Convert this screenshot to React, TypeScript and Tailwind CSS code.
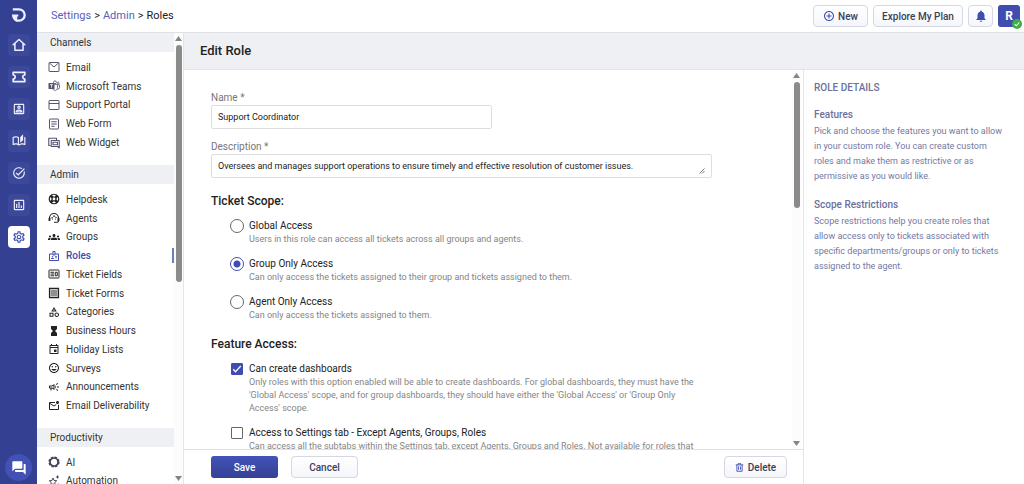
import { useState } from "react";
import type { ReactNode } from "react";
import type { IconType } from "react-icons";
import {
  MdForum,
  MdGroups,
  MdHourglassFull,
  MdNotifications,
  MdOutlineAddCircleOutline,
  MdOutlineAutoStories,
  MdOutlineBadge,
  MdOutlineCampaign,
  MdOutlineCategory,
  MdOutlineEvent,
  MdOutlineMarkEmailUnread,
  MdOutlinePoll,
  MdOutlinePortrait,
  MdOutlineSettings,
  MdOutlineTagFaces,
  MdTaskAlt,
} from "react-icons/md";
import { clsx } from "clsx";

type IconProps = { className?: string };
type Icon = IconType | ((props: IconProps) => ReactNode);

function Logo({ className }: IconProps) {
  return (
    <svg viewBox="0 0 14 14" className={className} fill="none" stroke="currentColor" strokeWidth="2.3">
      <path d="M.8 1.300h6.200a5.700 5.700 0 0 1 0 11.400H4.500" />
      <path d="M0 6.500h6.300v2H5.200v5.300C2.200 13 0 10.500 0 6.500z" fill="currentColor" stroke="none" />
    </svg>
  );
}

function HomeIcon({ className }: IconProps) {
  return (
    <svg viewBox="0 0 24 24" className={className} fill="none" stroke="currentColor" strokeWidth="2.6" strokeLinejoin="round">
      <path d="M2 11.500 12 2.500l10 9M5 9.500V21h14V9.500" strokeLinecap="round" />
    </svg>
  );
}

function TicketIcon({ className }: IconProps) {
  return (
    <svg viewBox="0 0 24 24" className={className} fill="none" stroke="currentColor" strokeWidth="2.8" strokeLinejoin="round">
      <path d="M2 4h20v4.500a3.500 3.500 0 0 0 0 7V20H2v-4.500a3.500 3.500 0 0 0 0-7z" />
    </svg>
  );
}

function MailIcon({ className }: IconProps) {
  return (
    <svg viewBox="0 0 24 24" className={className} fill="none" stroke="currentColor" strokeWidth="2">
      <rect x="2" y="3" width="20" height="18" rx="1" />
      <path d="m3 4 9 8 9-8" />
    </svg>
  );
}

function TeamsIcon({ className }: IconProps) {
  return (
    <svg viewBox="0 0 24 24" className={className} fill="none" stroke="currentColor" strokeWidth="1.6">
      <circle cx="14" cy="4.500" r="2.800" />
      <circle cx="20.500" cy="6" r="1.800" />
      <path d="M13 9h6v7a5 5 0 0 1-9.500 2M19 9.500h4V15a3.500 3.500 0 0 1-4 3.400" />
      <path d="M1 6h12v12H1z" fill="currentColor" stroke="none" />
      <path d="M4 9.300h6M7 9v6.500" stroke="#fff" strokeWidth="1.500" />
    </svg>
  );
}

function PortalIcon({ className }: IconProps) {
  return (
    <svg viewBox="0 0 24 24" className={className} fill="none" stroke="currentColor" strokeWidth="2">
      <rect x="2" y="3" width="20" height="18" rx="1" />
      <path d="M2 9h20" />
    </svg>
  );
}

function WebFormIcon({ className }: IconProps) {
  return (
    <svg viewBox="0 0 24 24" className={className} fill="none" stroke="currentColor" strokeWidth="2">
      <rect x="3" y="2" width="18" height="20" rx="1" />
      <path d="M6.500 7.500h11M6.500 12h11M6.500 16.500h7" />
    </svg>
  );
}

function WidgetIcon({ className }: IconProps) {
  return (
    <svg viewBox="0 0 24 24" className={clsx(className, "text-[#222]")} fill="none" stroke="currentColor" strokeWidth="2.2" strokeLinejoin="round">
      <path d="M5 17H1.500V2.500H17V6" />
      <path d="M6.500 7H22.500v15l-3-3h-13z" />
      <path d="M10 10.500h9v5h-9z" />
    </svg>
  );
}

function HelpdeskIcon({ className }: IconProps) {
  return (
    <svg viewBox="0 0 24 24" className={className} fill="none" stroke="currentColor">
      <circle cx="12" cy="12" r="9.500" strokeWidth="2.400" />
      <circle cx="12" cy="12" r="4" strokeWidth="2.400" />
      <path d="m5 5 4 4M19 5l-4 4M5 19l4-4M19 19l-4-4" strokeWidth="5" />
    </svg>
  );
}

function AgentIcon({ className }: IconProps) {
  return (
    <svg viewBox="0 0 24 24" className={className} fill="none" stroke="currentColor" strokeWidth="2.400">
      <path d="M3 15v-3a9 9 0 0 1 18 0v5.500a3 3 0 0 1-3 3h-6" />
      <path d="M3 12v6M21 12v6" strokeWidth="3.600" />
      <path d="M6.500 12c3-.5 5-2.300 5.500-5 1 2.500 3 3.800 5.500 4" strokeWidth="1.800" />
      <circle cx="9" cy="14" r="1.200" fill="currentColor" stroke="none" />
      <circle cx="15" cy="14" r="1.200" fill="currentColor" stroke="none" />
    </svg>
  );
}

function FieldsIcon({ className }: IconProps) {
  return (
    <svg viewBox="0 0 24 24" className={className} fill="none" stroke="currentColor" strokeWidth="2">
      <rect x="2" y="4" width="20" height="16" rx="1" />
      <path d="M5 8.500h7M5 12h7M5 15.500h7M14.500 8.500h4v7h-4z" />
    </svg>
  );
}

function FormsIcon({ className }: IconProps) {
  return (
    <svg viewBox="0 0 24 24" className={className} fill="none" stroke="currentColor" strokeWidth="2.400">
      <path d="M3 2.500h18v19H3zM3 3.500h18M3 20.500h18M5 8h14M5 12h14M5 16h14" />
    </svg>
  );
}

function AiIcon({ className }: IconProps) {
  return (
    <svg viewBox="0 0 24 24" className={className} fill="none" stroke="currentColor">
      <circle cx="12" cy="12" r="8" strokeWidth="3.400" />
      <circle cx="12" cy="12" r="9" strokeWidth="4.400" strokeDasharray="4.600 2.470" />
    </svg>
  );
}

function AutomationIcon({ className }: IconProps) {
  return (
    <svg viewBox="0 0 24 24" className={className} fill="none" stroke="currentColor" strokeWidth="2" strokeLinejoin="round">
      <path d="m10 6 2.200 5 5.300.5-4 3.600 1.200 5.400-4.700-2.800-4.700 2.800 1.200-5.400-4-3.600 5.300-.5z" />
      <path d="M19 1v6M16 4h6M20 17v4" />
    </svg>
  );
}

function TrashIcon({ className }: IconProps) {
  return (
    <svg viewBox="0 0 24 24" className={className} fill="none" stroke="currentColor" strokeWidth="2.400">
      <path d="M2 5h20M8 4V2h8v2M5 5v17h14V5M9.500 9v9M14.500 9v9" />
    </svg>
  );
}

const RAIL_ITEMS: { label: string; icon: Icon }[] = [
  { label: "Home", icon: HomeIcon },
  { label: "Tickets", icon: TicketIcon },
  { label: "Contacts", icon: MdOutlinePortrait },
  { label: "Knowledge Base", icon: MdOutlineAutoStories },
  { label: "Tasks", icon: MdTaskAlt },
  { label: "Reports", icon: MdOutlinePoll },
  { label: "Settings", icon: MdOutlineSettings },
];

const CHANNELS: { label: string; icon: Icon }[] = [
  { label: "Email", icon: MailIcon },
  { label: "Microsoft Teams", icon: TeamsIcon },
  { label: "Support Portal", icon: PortalIcon },
  { label: "Web Form", icon: WebFormIcon },
  { label: "Web Widget", icon: WidgetIcon },
];

const ADMIN: { label: string; icon: Icon }[] = [
  { label: "Helpdesk", icon: HelpdeskIcon },
  { label: "Agents", icon: AgentIcon },
  { label: "Groups", icon: MdGroups },
  { label: "Roles", icon: MdOutlineBadge },
  { label: "Ticket Fields", icon: FieldsIcon },
  { label: "Ticket Forms", icon: FormsIcon },
  { label: "Categories", icon: MdOutlineCategory },
  { label: "Business Hours", icon: MdHourglassFull },
  { label: "Holiday Lists", icon: MdOutlineEvent },
  { label: "Surveys", icon: MdOutlineTagFaces },
  { label: "Announcements", icon: MdOutlineCampaign },
  { label: "Email Deliverability", icon: MdOutlineMarkEmailUnread },
];

const PRODUCTIVITY: { label: string; icon: Icon }[] = [
  { label: "AI", icon: AiIcon },
  { label: "Automation", icon: AutomationIcon },
];

const SCOPES = [
  { id: "global", label: "Global Access", hint: "Users in this role can access all tickets across all groups and agents." },
  {
    id: "group",
    label: "Group Only Access",
    hint: "Can only access the tickets assigned to their group and tickets assigned to them.",
  },
  { id: "agent", label: "Agent Only Access", hint: "Can only access the tickets assigned to them." },
];

const FEATURES = [
  {
    id: "dashboards",
    label: "Can create dashboards",
    hint: "Only roles with this option enabled will be able to create dashboards. For global dashboards, they must have the 'Global Access' scope, and for group dashboards, they should have either the 'Global Access' or 'Group Only Access' scope.",
    checked: true,
  },
  {
    id: "settings",
    label: "Access to Settings tab - Except Agents, Groups, Roles",
    hint: "Can access all the subtabs within the Settings tab, except Agents, Groups and Roles. Not available for roles that",
    checked: false,
  },
];

const BUTTON =
  "flex items-center justify-center rounded border border-[#d5d7e3] bg-linear-to-b from-white to-[#f5f6fb] text-[10px] font-medium text-[#3c4058]";

function Scrollbar({ thumb }: { thumb: string }) {
  return (
    <div aria-hidden="true" className="flex w-[9px] shrink-0 flex-col items-center bg-[#fcfcfc] py-[3px]">
      <svg viewBox="0 0 7 5" className="mb-1 h-[5px] w-[7px] shrink-0 fill-[#858585]">
        <path d="M3.500 0 7 5H0z" />
      </svg>
      <div className="min-h-0 w-full flex-1">
        <div className={clsx("mx-auto w-1.5 rounded-full bg-[#8b8b8b]", thumb)} />
      </div>
      <svg viewBox="0 0 7 5" className="h-[5px] w-[7px] shrink-0 fill-[#858585]">
        <path d="M0 0h7L3.500 5z" />
      </svg>
    </div>
  );
}

function NavSection({
  title,
  items,
  height,
  iconColor,
}: {
  title: string;
  items: { label: string; icon: Icon }[];
  height: string;
  iconColor: string;
}) {
  return (
    <section className="mb-[13px]">
      <h2 className="flex h-[19px] items-center bg-[#eff0f4] pl-[13px] text-[10px] text-[#333]">{title}</h2>
      <ul className={clsx("mt-1.5 grid auto-rows-fr", height)}>
        {items.map((item) => {
          const ItemIcon = item.icon;
          const active = item.label === "Roles";
          return (
            <li key={item.label} className="relative flex">
              <a
                href="#"
                aria-current={active ? "page" : undefined}
                className={clsx(
                  "flex flex-1 items-center gap-1.5 pl-[11px] text-[10px]",
                  active ? "font-medium text-[#3d4db0]" : "text-[#333]"
                )}
              >
                <ItemIcon className={clsx("size-3 shrink-0", active ? "text-[#3d4db0]" : iconColor)} />
                {item.label}
              </a>
              {active && <span className="absolute inset-y-0.5 right-0 w-0.5 bg-[#6f7cc0]" />}
            </li>
          );
        })}
      </ul>
    </section>
  );
}

function Rail() {
  return (
    <nav className="flex w-[37px] shrink-0 flex-col items-center bg-[#344193] pt-2 pb-[3px]">
      <Logo className="mb-3 size-[14px] text-[#eef0ff]" />
      <div className="flex flex-col gap-[10px]">
        {RAIL_ITEMS.map((item) => {
          const ItemIcon = item.icon;
          return (
            <a
              key={item.label}
              href="#"
              aria-label={item.label}
              className={clsx(
                "flex size-[22px] items-center justify-center rounded",
                item.label === "Settings" ? "bg-white text-[#3d4db0]" : "bg-[#3c4899] text-[#eef0ff]"
              )}
            >
              <ItemIcon className="size-[14px]" />
            </a>
          );
        })}
      </div>
      <button
        type="button"
        aria-label="Chat"
        className="mt-auto flex size-[27px] items-center justify-center rounded-full bg-[#4251b5] text-white"
      >
        <MdForum className="size-4" />
      </button>
    </nav>
  );
}

function TopBar() {
  return (
    <header className="flex h-[33px] shrink-0 items-center justify-between border-b border-[#e0e1e8] pr-1 pl-3.5">
      <nav aria-label="Breadcrumb" className="flex gap-[3px] text-[11px] text-[#222]">
        <a href="#" className="text-[#5562ba]">Settings</a>
        <span>&gt;</span>
        <a href="#" className="text-[#5562ba]">Admin</a>
        <span>&gt;</span>
        <span>Roles</span>
      </nav>
      <div className="flex items-center gap-[5px]">
        <button type="button" className={clsx(BUTTON, "h-[22px] w-[55px] gap-[3px]")}>
          <MdOutlineAddCircleOutline className="size-3 text-[#3d4db0]" />
          New
        </button>
        <button type="button" className={clsx(BUTTON, "h-[22px] w-[90px]")}>
          Explore My Plan
        </button>
        <button type="button" aria-label="Notifications" className={clsx(BUTTON, "h-[22px] w-[25px]")}>
          <MdNotifications className="size-[14px] text-[#3d4db0]" />
        </button>
        <button
          type="button"
          aria-label="Profile"
          className="relative flex size-[22px] items-center justify-center rounded-[3px] bg-[#3f4db0] text-xs font-bold text-white"
        >
          R
          <svg viewBox="0 0 10 10" className="absolute -right-0.5 -bottom-0.5 size-[10px]">
            <circle cx="5" cy="5" r="5" fill="#41ad49" />
            <path d="m2.700 5.200 1.600 1.600 3-3.300" fill="none" stroke="#fff" strokeWidth="1.100" />
          </svg>
        </button>
      </div>
    </header>
  );
}

function RoleForm() {
  const [scope, setScope] = useState("group");

  return (
    <div className="min-h-0 flex-1 overflow-y-auto pt-5 pl-[27px] [scrollbar-width:none]">
      <div className="max-w-[501px]">
        <label htmlFor="role-name" className="block text-[10px] leading-[15px] text-[#777]">
          Name *
        </label>
        <input
          id="role-name"
          defaultValue="Support Coordinator"
          className="block h-6 w-[281px] rounded-xs border border-[#dedede] px-1.5 text-[9px] text-[#222]"
        />
        <label htmlFor="role-description" className="mt-[10px] block text-[10px] leading-[15px] text-[#777]">
          Description *
        </label>
        <div className="relative">
          <textarea
            id="role-description"
            rows={1}
            defaultValue="Oversees and manages support operations to ensure timely and effective resolution of customer issues."
            className="block h-6 w-full resize-none overflow-hidden rounded-xs border border-[#dedede] px-1.5 py-1 text-[9px] leading-[14px] text-[#222]"
          />
          <svg viewBox="0 0 6 6" className="absolute right-[7px] bottom-1 size-1.5 stroke-[#555]">
            <path d="M.5 5.500l5-5M3 5.500 5.500 3" strokeWidth=".8" />
          </svg>
        </div>

        <fieldset className="mt-[14px]">
          <legend className="text-xs leading-[18px] font-medium text-[#222]">Ticket Scope:</legend>
          <div className="mt-[9px] flex flex-col gap-[11px] pl-[19px]">
            {SCOPES.map((item) => (
              <div key={item.id} className="flex gap-[5px]">
                <input
                  type="radio"
                  id={item.id}
                  name="scope"
                  checked={scope === item.id}
                  onChange={() => setScope(item.id)}
                  className="size-[14px] shrink-0 appearance-none rounded-full border border-[#666] checked:border-[#3f4db0] checked:bg-[radial-gradient(circle,#3f4db0_3px,transparent_4px)]"
                />
                <div>
                  <label htmlFor={item.id} className="block text-[10px] leading-[14px] text-[#222]">
                    {item.label}
                  </label>
                  <p className="text-[9px] leading-[13px] text-[#858585]">{item.hint}</p>
                </div>
              </div>
            ))}
          </div>
        </fieldset>

        <fieldset className="mt-[13px]">
          <legend className="text-xs leading-[18px] font-medium text-[#222]">Feature Access:</legend>
          <div className="mt-[9px] flex flex-col gap-[11px] pl-[19px]">
            {FEATURES.map((item) => (
              <div key={item.id} className="flex gap-[5px]">
                <span className="relative flex h-[14px] w-[14px] shrink-0 items-center justify-center">
                  <input
                    type="checkbox"
                    id={item.id}
                    defaultChecked={item.checked}
                    className="peer size-3 appearance-none rounded-[1px] border border-[#666] checked:border-[#3f4db0] checked:bg-[#3f4db0]"
                  />
                  <svg
                    viewBox="0 0 12 12"
                    className="pointer-events-none absolute size-3 fill-none stroke-white opacity-0 peer-checked:opacity-100"
                  >
                    <path d="m2.200 6.300 2.300 2.400 5.300-5.700" strokeWidth="1.300" />
                  </svg>
                </span>
                <div className="max-w-[455px]">
                  <label htmlFor={item.id} className="block text-[10px] leading-[14px] text-[#222]">
                    {item.label}
                  </label>
                  <p className="text-[9px] leading-[13px] text-[#858585]">{item.hint}</p>
                </div>
              </div>
            ))}
          </div>
        </fieldset>
      </div>
    </div>
  );
}

function RoleDetails() {
  return (
    <aside className="w-[221px] shrink-0 border-l border-[#e4e5ea] pt-[10px] pr-[18px] pl-[10px] text-[9px] leading-[15px] text-[#7478a4]">
      <h2 className="text-[10px] leading-[15px] font-medium text-[#6b719d]">ROLE DETAILS</h2>
      <h3 className="mt-3 text-[10px] leading-[15px] font-medium text-[#6b719d]">Features</h3>
      <p className="mt-0.5">
        Pick and choose the features you want to allow in your custom role. You can create custom roles and make them as
        restrictive or as permissive as you would like.
      </p>
      <h3 className="mt-[13px] text-[10px] leading-[15px] font-medium text-[#6b719d]">Scope Restrictions</h3>
      <p className="mt-0.5">
        Scope restrictions help you create roles that allow access only to tickets associated with specific
        departments/groups or only to tickets assigned to the agent.
      </p>
    </aside>
  );
}

export default function App() {
  return (
    <div className="flex h-screen overflow-hidden bg-white font-[Roboto,sans-serif]">
      <Rail />
      <div className="flex min-w-0 flex-1 flex-col">
        <TopBar />
        <div className="flex min-h-0 flex-1">
          <aside className="flex w-[147px] shrink-0 border-r border-[#e4e5ea]">
            <div className="min-w-0 flex-1 overflow-y-auto [scrollbar-width:none]">
              <NavSection title="Channels" items={CHANNELS} height="h-[94px]" iconColor="text-[#55566e]" />
              <NavSection title="Admin" items={ADMIN} height="h-[225px]" iconColor="text-[#222]" />
              <NavSection title="Productivity" items={PRODUCTIVITY} height="h-[37px]" iconColor="text-[#44455c]" />
            </div>
            <Scrollbar thumb="h-[55%]" />
          </aside>
          <main className="flex min-w-0 flex-1 flex-col">
            <div className="flex h-[37px] shrink-0 items-center border-b border-[#e4e5ea] bg-[#eff0f4] pl-4">
              <h1 className="text-[13px] font-medium text-[#222]">Edit Role</h1>
            </div>
            <div className="flex min-h-0 flex-1">
              <div className="flex min-w-0 flex-1 flex-col">
                <div className="flex min-h-0 flex-1 pr-0.5">
                  <RoleForm />
                  <Scrollbar thumb="h-[35%]" />
                </div>
                <footer className="flex h-[35px] shrink-0 items-center border-t border-[#e0e0e0] pr-4 pl-[27px]">
                  <button
                    type="button"
                    className="h-[22px] w-[67px] rounded-[3px] bg-linear-to-b from-[#4352b8] to-[#344193] text-[10px] font-medium text-white"
                  >
                    Save
                  </button>
                  <button type="button" className={clsx(BUTTON, "ml-[13px] h-[22px] w-[67px]")}>
                    Cancel
                  </button>
                  <button type="button" className={clsx(BUTTON, "ml-auto h-[22px] w-[63px] gap-1")}>
                    <TrashIcon className="size-[9px] text-[#3d4db0]" />
                    Delete
                  </button>
                </footer>
              </div>
              <RoleDetails />
            </div>
          </main>
        </div>
      </div>
    </div>
  );
}
